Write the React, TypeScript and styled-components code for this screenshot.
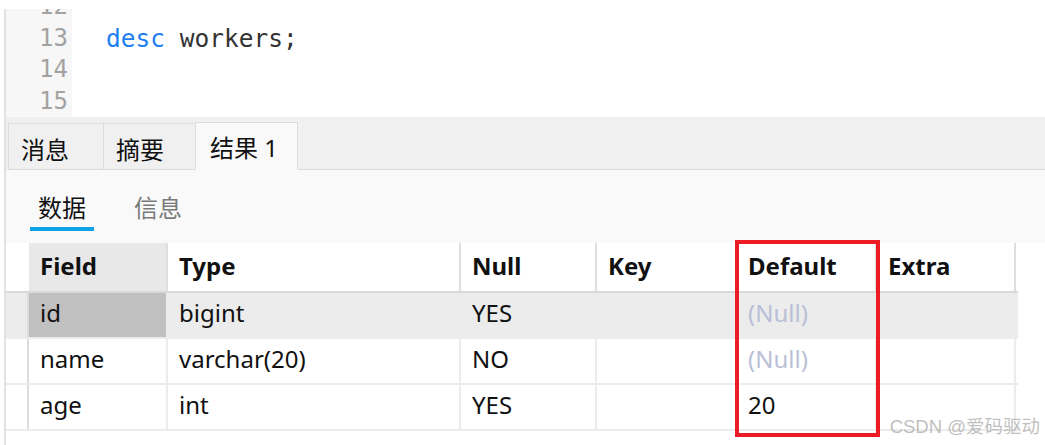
import React from 'react';
import styled, { createGlobalStyle } from 'styled-components';

const GlobalStyle = createGlobalStyle`
    html, body {
        margin: 0;
        padding: 0;
        background: #ffffff;
    }
    * {
        box-sizing: border-box;
    }
`;

interface Column {
    name: string;
    width: number;
}

const columns: Column[] = [
    { name: 'Field', width: 139 },
    { name: 'Type', width: 293 },
    { name: 'Null', width: 136 },
    { name: 'Key', width: 140 },
    { name: 'Default', width: 140 },
    { name: 'Extra', width: 139 },
];

type Cell = string | null;

const rows: Cell[][] = [
    ['id', 'bigint', 'YES', '', null, ''],
    ['name', 'varchar(20)', 'NO', '', null, ''],
    ['age', 'int', 'YES', '', '20', ''],
];

const codeLines = [
    { no: 12, code: null },
    { no: 13, code: 'workers;' },
    { no: 14, code: null },
    { no: 15, code: null },
];

const tabs = [
    { label: '消息', width: 96 },
    { label: '摘要', width: 93 },
    { label: '结果 1', width: 103, active: true },
];

const gridTemplate = `23px ${columns.map(c => `${c.width}px`).join(' ')}`;

const App: React.FC = () => {
    return (
        <Page>
            <GlobalStyle />
            <Frame>
                <Editor>
                    <Gutter>
                        {codeLines.map(line => (
                            <LineNo key={line.no}>{line.no}</LineNo>
                        ))}
                    </Gutter>
                    <Code>
                        {codeLines.map(line => (
                            <CodeLine key={line.no}>
                                {line.code && (
                                    <>
                                        <Keyword>desc</Keyword> {line.code}
                                    </>
                                )}
                            </CodeLine>
                        ))}
                    </Code>
                </Editor>

                <TabBar>
                    {tabs.map(tab => (
                        <Tab key={tab.label} $active={!!tab.active} $width={tab.width}>
                            {tab.label}
                        </Tab>
                    ))}
                    <TabFiller />
                </TabBar>

                <SubTabPanel>
                    <SubTab $active>数据</SubTab>
                    <SubTab>信息</SubTab>
                </SubTabPanel>

                <TableArea>
                    <Grid>
                        <HeaderRow>
                            <Indicator $header />
                            {columns.map((col, i) => (
                                <HeadCell key={col.name} $selected={i === 0}>
                                    {col.name}
                                </HeadCell>
                            ))}
                        </HeaderRow>
                        {rows.map((row, r) => (
                            <BodyRow key={r} $current={r === 0}>
                                <Indicator $current={r === 0} />
                                {row.map((value, c) => (
                                    <BodyCell key={c} $selected={r === 0 && c === 0} $null={value === null}>
                                        {value === null ? '(Null)' : value}
                                    </BodyCell>
                                ))}
                            </BodyRow>
                        ))}
                    </Grid>
                </TableArea>
            </Frame>

            <Highlight />
            <Watermark>CSDN @爱码驱动</Watermark>
        </Page>
    );
};

export default App;

const Page = styled.div`
    position: relative;
    width: 1045px;
    height: 445px;
    overflow: hidden;
    padding: 9px 0 0 4px;
    background: #ffffff;
    font-family: "Noto Sans", "Noto Sans CJK SC", sans-serif;
`;

const Frame = styled.div`
    height: 100%;
    border-left: 2px solid #e2e2e2;
    display: flex;
    flex-direction: column;
`;

const Editor = styled.div`
    height: 108px;
    display: flex;
    overflow: hidden;
    background: #ffffff;
`;

const Gutter = styled.div`
    width: 66px;
    background: #f7f7f7;
    padding-right: 4px;
    display: flex;
    flex-direction: column;
    align-items: flex-end;
`;

const LineNo = styled.div`
    flex-shrink: 0;
    height: 31.5px;
    line-height: 31.5px;
    font-family: "DejaVu Sans Mono", monospace;
    font-size: 24px;
    color: #a2a2a2;
    &:first-child {
        margin-top: -18px;
    }
`;

const Code = styled.div`
    flex: 1;
    padding-left: 34px;
    display: flex;
    flex-direction: column;
`;

const CodeLine = styled.div`
    flex-shrink: 0;
    height: 31.5px;
    line-height: 31.5px;
    font-family: "DejaVu Sans Mono", monospace;
    font-size: 24.5px;
    color: #333333;
    white-space: pre;
    &:first-child {
        margin-top: -18px;
    }
`;

const Keyword = styled.span`
    color: #1f7ff2;
`;

const TabBar = styled.div`
    height: 53px;
    background: #f0f0f0;
    padding: 6px 0 0 2px;
    display: flex;
    align-items: stretch;
`;

const Tab = styled.div<{ $active: boolean; $width: number }>`
    width: ${p => p.$width}px;
    padding-left: ${p => (p.$active ? 14 : 12)}px;
    padding-top: ${p => (p.$active ? 0 : 4)}px;
    display: flex;
    align-items: center;
    font-size: 24px;
    color: #111111;
    background: ${p => (p.$active ? '#f9f9f9' : '#f0f0f0')};
    border: 1px solid #dcdcdc;
    border-bottom: ${p => (p.$active ? '1px solid #f9f9f9' : '1px solid #dcdcdc')};
    margin-right: -1px;
    margin-top: ${p => (p.$active ? -1 : 0)}px;
    position: relative;
    z-index: ${p => (p.$active ? 1 : 0)};
`;

const TabFiller = styled.div`
    flex: 1;
    border-bottom: 1px solid #dcdcdc;
`;

const SubTabPanel = styled.div`
    height: 73px;
    background: #f9f9f9;
    display: flex;
    gap: 32px;
    padding: 20px 0 0 24px;
`;

const SubTab = styled.div<{ $active?: boolean }>`
    height: 41px;
    padding: 0 8px;
    font-size: 24px;
    line-height: 36px;
    color: ${p => (p.$active ? '#111111' : '#7a7a7a')};
    border-bottom: 4px solid ${p => (p.$active ? '#0ea2e6' : 'transparent')};
`;

const TableArea = styled.div`
    flex: 1;
    background: #ffffff;
`;

const Grid = styled.div`
    width: 1012px;
    display: flex;
    flex-direction: column;
`;

const HeaderRow = styled.div`
    display: grid;
    grid-template-columns: ${gridTemplate};
    height: 50px;
    border-bottom: 2px solid #d9d9d9;
`;

const BodyRow = styled.div<{ $current: boolean }>`
    display: grid;
    grid-template-columns: ${gridTemplate};
    height: 46px;
    border-bottom: 2px solid #ececec;
    background: ${p => (p.$current ? '#ececec' : '#ffffff')};
`;

const Indicator = styled.div<{ $header?: boolean; $current?: boolean }>`
    background: ${p => (p.$current ? '#ececec' : '#ffffff')};
    border-right: 2px solid ${p => (p.$header ? '#ffffff' : '#dcdcdc')};
`;

const HeadCell = styled.div<{ $selected: boolean }>`
    display: flex;
    align-items: center;
    padding: 0 0 4px 11px;
    font-size: 24px;
    font-weight: 700;
    color: #111111;
    background: ${p => (p.$selected ? '#e8e8e8' : '#ffffff')};
    border-right: 2px solid #dedede;
`;

const BodyCell = styled.div<{ $selected: boolean; $null: boolean }>`
    display: flex;
    align-items: center;
    padding: 0 0 5px 11px;
    font-size: 24px;
    color: ${p => (p.$null ? '#b9c0d6' : '#111111')};
    background: ${p => (p.$selected ? '#c0c0c0' : 'transparent')};
    border-right: 2px solid #ececec;
`;

const Highlight = styled.div`
    position: absolute;
    left: 735px;
    top: 240px;
    width: 145px;
    height: 197px;
    border: 4px solid #ed1c24;
    pointer-events: none;
`;

const Watermark = styled.div`
    position: absolute;
    right: 5px;
    bottom: 7px;
    font-family: "Liberation Sans", "Noto Sans CJK SC", sans-serif;
    font-size: 18.5px;
    color: rgba(170, 170, 170, 0.75);
`;
